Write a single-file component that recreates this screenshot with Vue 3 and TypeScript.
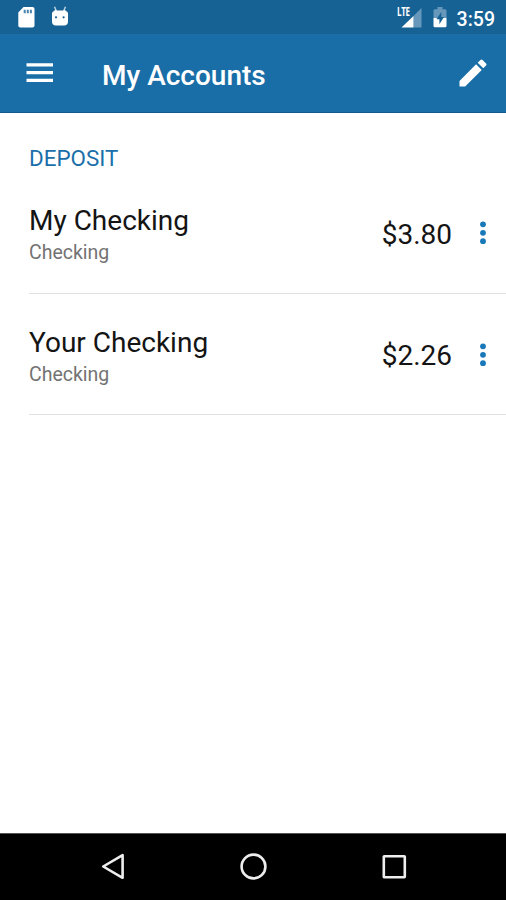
<script setup lang="ts">
interface Account {
  name: string
  kind: string
  balance: string
}

const accounts: Account[] = [
  { name: 'My Checking', kind: 'Checking', balance: '$3.80' },
  { name: 'Your Checking', kind: 'Checking', balance: '$2.26' },
]
</script>

<template>
  <div class="screen">
    <header class="status">
      <svg class="sd" width="17" height="21" viewBox="0 0 17 21">
        <path fill="#fff" d="M5.500 0h9a2 2 0 0 1 2 2v16.500a2 2 0 0 1-2 2H2.300a2 2 0 0 1-2-2V5.500z" />
        <path fill="#4b84ad" d="M5.700 2.700h2v3.500h-2zM8.800 2.700h2v3.500h-2zM11.900 2.700h2v3.500h-2z" />
      </svg>
      <svg class="bot" width="18" height="21" viewBox="0 0 18 21">
        <path d="M3.500.8L5.300 5M14.500.8L12.700 5" stroke="#b9d0e0" stroke-width="1.500" />
        <path fill="#fff" d="M1 7.500Q1 5.500 3 5Q4 3.500 6 4.500h6q2-1 3 .5q2 .5 2 2.500v8q0 4-4 4H5q-4 0-4-4z" />
        <circle cx="5" cy="11.300" r="1.100" fill="#176295" />
        <circle cx="12.600" cy="11.300" r="1.100" fill="#176295" />
      </svg>
      <div class="signal">
        <span class="lte">LTE</span>
        <svg width="21" height="20" viewBox="0 0 21 20">
          <path fill="#6798bb" d="M12.500 8L20.500 0v19.500h-8z" />
          <path fill="#fff" d="M0.500 19.500L12.500 8v11.500z" />
        </svg>
      </div>
      <svg class="battery" width="14" height="21" viewBox="0 0 14 21">
        <path fill="#6798bb" d="M4.500 0h5v2.300H12q1.500 0 1.500 1.500V11H.5V3.800q0-1.500 1.500-1.500h2.500z" />
        <path fill="#fff" d="M.5 11h13v8q0 1.300-1.500 1.300H2Q.5 20.300.5 19z" />
        <path fill="#176295" d="M8.300 5L3.400 12.300h3v5L11 10H8.300z" />
      </svg>
      <span class="time">3:59</span>
    </header>

    <div class="toolbar">
      <svg class="menu" width="27" height="20" viewBox="0 0 27 20">
        <path fill="#fff" d="M.5.300h26.500v3.300H.5zM.5 7.900h26.500v3.300H.5zM.5 15.700h26.500v3.300H.5z" />
      </svg>
      <h1>My Accounts</h1>
      <svg class="edit" width="36" height="36" viewBox="0 0 24 24">
        <path fill="#fff" d="M3 17.250V21h3.750L17.810 9.940l-3.750-3.750L3 17.250zM20.710 7.040a1 1 0 0 0 0-1.410l-2.340-2.340a1 1 0 0 0-1.410 0l-1.830 1.830 3.750 3.750 1.830-1.830z" />
      </svg>
    </div>

    <main>
      <h2>DEPOSIT</h2>
      <section v-for="account in accounts" :key="account.name" class="account">
        <div class="info">
          <span class="name">{{ account.name }}</span>
          <span class="kind">{{ account.kind }}</span>
        </div>
        <span class="balance">{{ account.balance }}</span>
        <svg class="more" width="8" height="24" viewBox="0 0 8 24">
          <g fill="#1878b8">
            <circle cx="4" cy="3.300" r="2.900" />
            <circle cx="4" cy="11.800" r="2.900" />
            <circle cx="4" cy="20.200" r="2.900" />
          </g>
        </svg>
      </section>
    </main>

    <nav>
      <svg viewBox="0 0 30 30">
        <path d="M24.600 4.200v22.600L5.200 15.500z" />
      </svg>
      <svg viewBox="0 0 30 30">
        <circle cx="15.500" cy="15.500" r="11.900" />
      </svg>
      <svg viewBox="0 0 30 30">
        <rect x="4.800" y="5.200" width="21" height="21" rx=".5" />
      </svg>
    </nav>
  </div>
</template>

<style>
body {
  margin: 0;
}
</style>

<style scoped>
.screen {
  display: flex;
  flex-direction: column;
  width: 506px;
  height: 900px;
  overflow: hidden;
  background: #fff;
  font-family: Roboto, sans-serif;
}
svg {
  display: block;
  flex: none;
}
.status {
  display: flex;
  align-items: flex-start;
  box-sizing: border-box;
  height: 34px;
  padding: 7px 11px 0 18px;
  background: #176295;
  color: #fff;
}
.bot {
  margin: -1px auto 0 15.500px;
}
.signal {
  display: flex;
  align-items: flex-start;
  padding-top: 1px;
}
.lte {
  width: 4.500px;
  font-family: "Open Sans", Roboto, sans-serif;
  font-size: 11.500px;
  line-height: 8px;
  font-weight: 700;
  letter-spacing: -0.500px;
  transform: scaleX(0.700);
  transform-origin: 0 50%;
}
.battery {
  margin: 0 9.500px 0 11px;
}
.time {
  font-size: 19.500px;
  line-height: 25px;
  font-weight: 500;
}
.toolbar {
  display: flex;
  align-items: center;
  box-sizing: border-box;
  height: 79px;
  padding: 0 15px 0 26px;
  border-bottom: 1px solid #115a91;
  background: #196ea8;
  color: #fff;
}
h1 {
  flex: 1;
  margin: 5px 0 0 49px;
  font-size: 28px;
  line-height: 32px;
  font-weight: 500;
}
main {
  flex: 1;
  padding-left: 29px;
}
h2 {
  margin: 32px 0 0;
  font-size: 22.400px;
  line-height: 27px;
  font-weight: 400;
  color: #1a6fab;
}
.account {
  display: flex;
  align-items: center;
  box-sizing: border-box;
  height: 121.500px;
  padding: 5px 19px 0 0;
  border-bottom: 1.500px solid #e2e2e2;
}
.info {
  display: flex;
  flex: 1;
  flex-direction: column;
  padding-top: 3px;
}
.name {
  font-size: 28px;
  line-height: 33px;
  color: #141414;
}
.kind {
  margin-top: 1px;
  font-size: 19.500px;
  line-height: 30px;
  color: #737373;
}
.balance {
  font-size: 28px;
  line-height: 34px;
  color: #141414;
}
.more {
  margin: -3px 0 0 27px;
}
nav {
  display: flex;
  justify-content: center;
  gap: 110.500px;
  box-sizing: border-box;
  height: 67px;
  padding-top: 17px;
  border-top: 1px solid #555;
  background: #000;
}
nav svg {
  width: 30px;
  height: 30px;
  fill: none;
  stroke: #eee;
  stroke-width: 2.600;
  stroke-linejoin: round;
}
</style>
